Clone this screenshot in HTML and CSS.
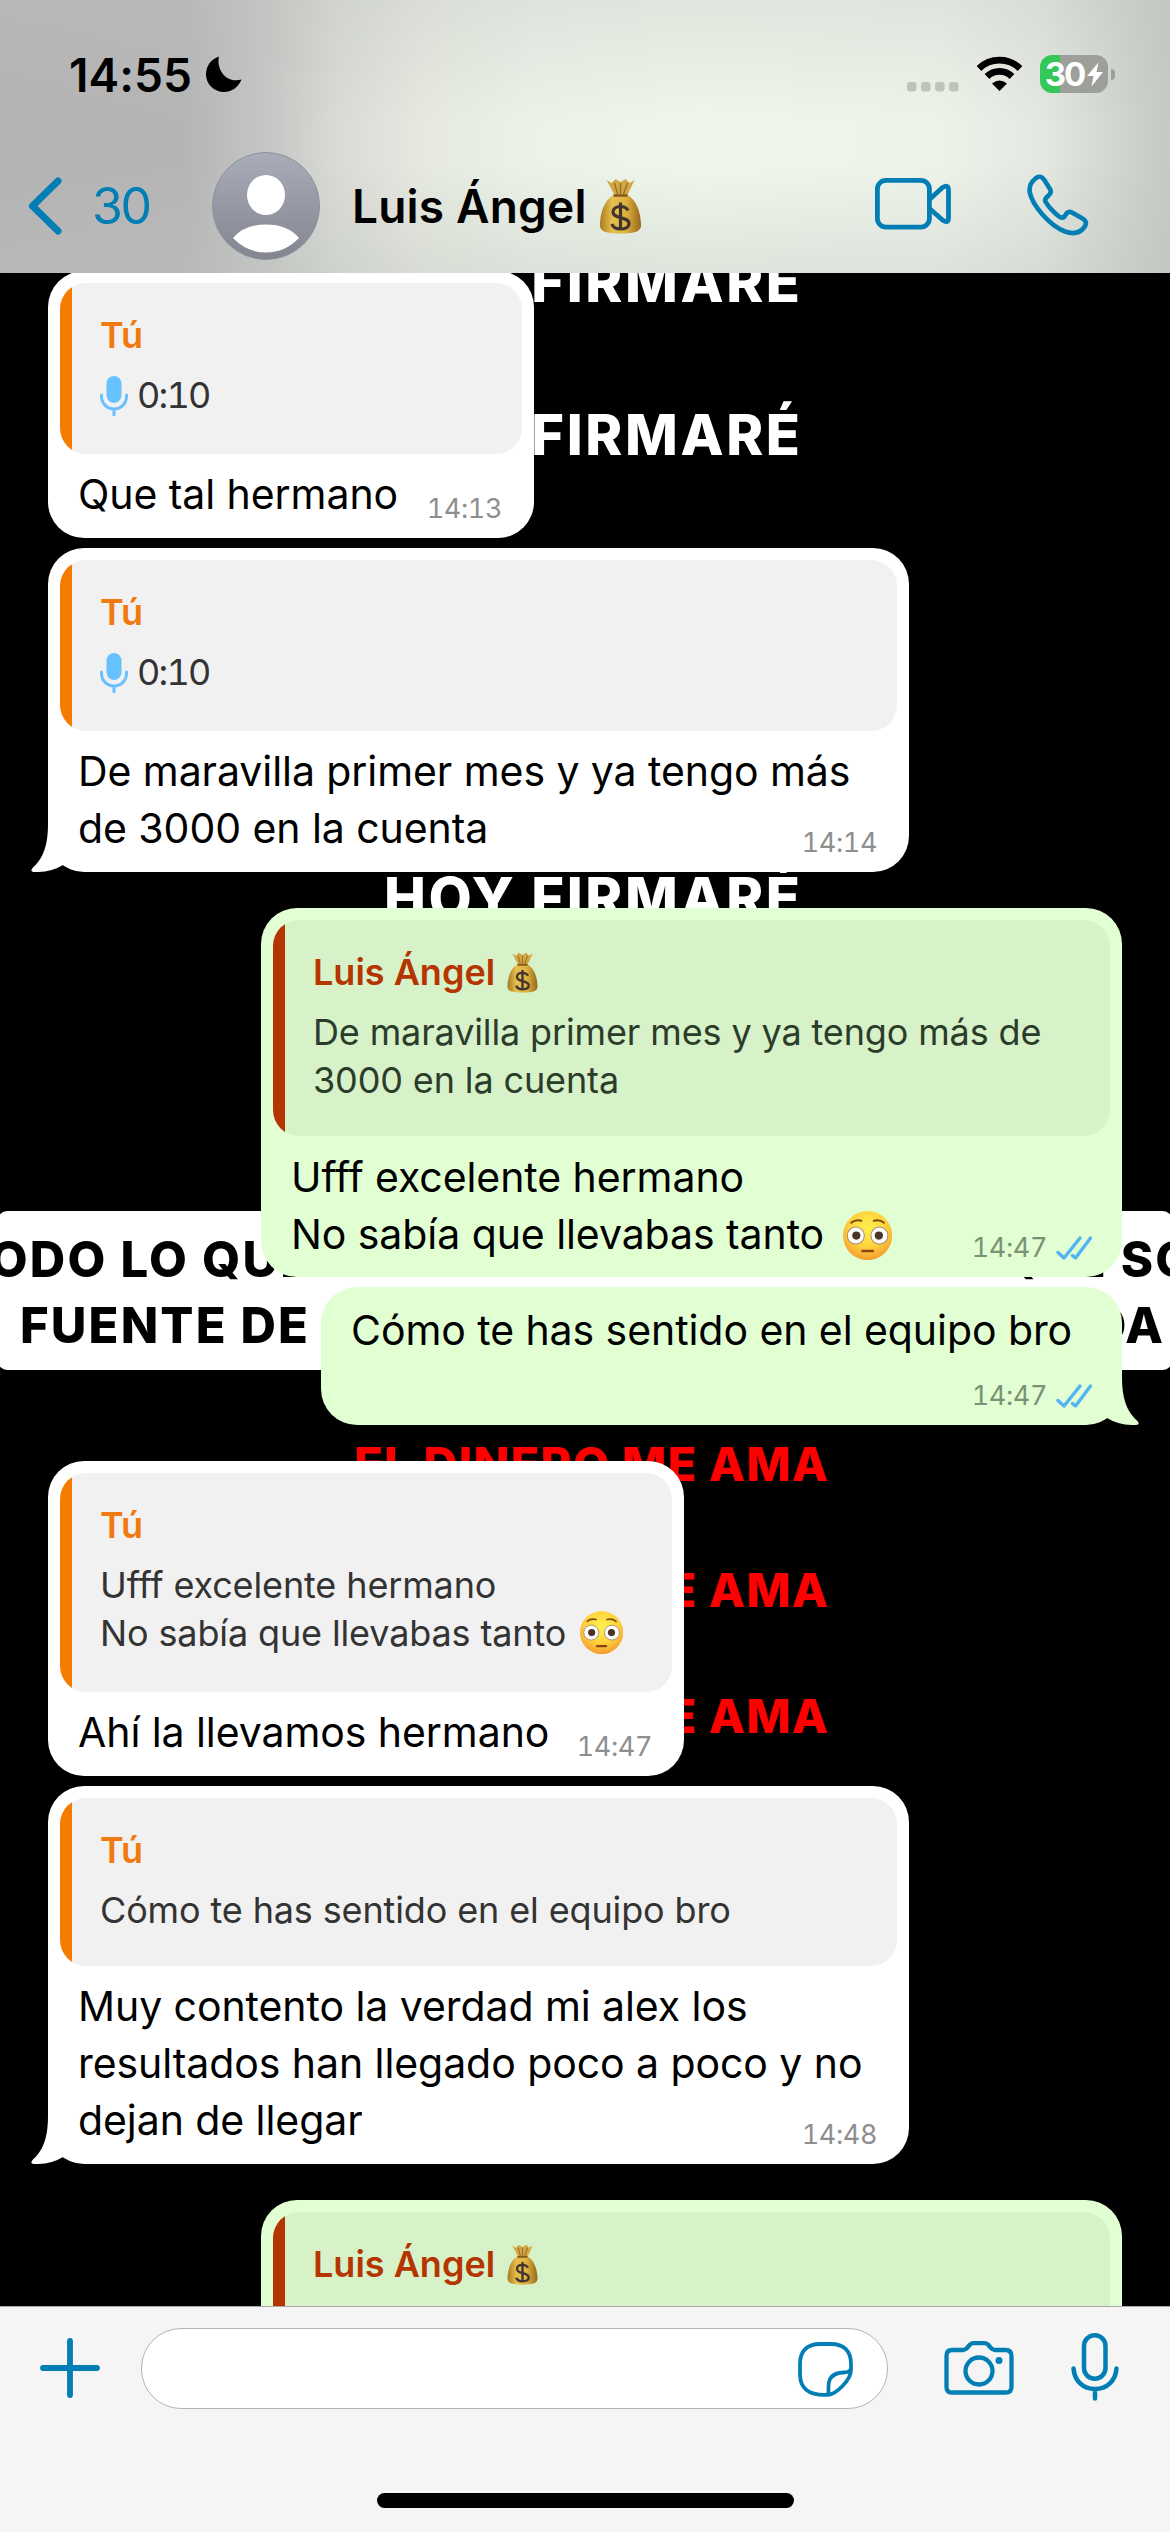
FILE: index.html
```html
<!DOCTYPE html>
<html lang="es">
<head>
<meta charset="utf-8">
<title>Luis Ángel</title>
<link rel="stylesheet" href="styles.css">
</head>
<body>
<svg width="0" height="0" class="defs" aria-hidden="true">
  <defs>
    <linearGradient id="gold" x1="0" x2="1"><stop offset="0" stop-color="#a87a1c"/><stop offset=".3" stop-color="#e8c050"/><stop offset=".65" stop-color="#ddb03c"/><stop offset="1" stop-color="#94681c"/></linearGradient>
    <radialGradient id="skin" cx=".5" cy=".35" r=".7"><stop offset="0" stop-color="#fff04f"/><stop offset=".55" stop-color="#ffd23c"/><stop offset="1" stop-color="#f0922c"/></radialGradient>
    <linearGradient id="avatar" x1="0" y1="0" x2="0" y2="1"><stop offset="0" stop-color="#a9adba"/><stop offset="1" stop-color="#83858f"/></linearGradient>
  </defs>
  <symbol id="bag" viewBox="0 0 42 56">
    <path d="M7 2 L12 5 L16 1 L21 4 L26 1 L30 5 L35 2 L28 17 H15Z" fill="#d3a743"/>
    <path d="M15 5l3 11M21 5v11M28 5l-4 11" stroke="#9a702a" stroke-width="1.5" fill="none"/>
    <path d="M14 17 H28 C37 22 41 34 41.500 46 C42 53 37 55.500 21 55.500 C5 55.500 0 53 .5 46 C1 34 5 22 14 17Z" fill="url(#gold)"/>
    <path d="M14 17.500h14" stroke="#86581c" stroke-width="2.500"/>
    <path d="M28.500 32.500C27 29.500 24.500 28.500 21 28.500c-4.500 0-7.500 2-7.500 5.500 0 7.500 16 4 16 11.500 0 3.500-3.500 5.500-8.500 5.500-4.500 0-7.500-1.500-8.500-5M21 24.500v28" fill="none" stroke="#42352f" stroke-width="3.200"/>
  </symbol>
  <symbol id="flushed" viewBox="0 0 48 48">
    <circle cx="24" cy="24" r="24" fill="url(#skin)"/>
    <circle cx="12.500" cy="24" r="8.300" fill="#fff" stroke="#a28b75" stroke-width="1"/>
    <circle cx="35.500" cy="24" r="8.300" fill="#fff" stroke="#a28b75" stroke-width="1"/>
    <circle cx="13" cy="24" r="4" fill="#4d3326"/><circle cx="35" cy="24" r="4" fill="#4d3326"/>
    <path d="M8 11.500q4-3.500 10-2M30 9.500q6-1.500 10 2" fill="none" stroke="#7b4a12" stroke-width="1.800" stroke-linecap="round"/>
    <path d="M19 39h10" stroke="#8b4316" stroke-width="2.600" stroke-linecap="round"/>
  </symbol>
  <symbol id="voice" viewBox="0 0 28 40">
    <rect x="6.500" y="0" width="15" height="27" rx="7.500" fill="#68c1ff"/>
    <path d="M1.500 19v1.500a12.500 12.500 0 0 0 25 0V19M14 33v6" fill="none" stroke="#68c1ff" stroke-width="3" stroke-linecap="round"/>
  </symbol>
  <symbol id="read" viewBox="0 0 36 24">
    <path d="M2 16.500l6 5.500L24 2M16.500 19.500l3 2.500L34.500 2" fill="none" stroke="#53b4f5" stroke-width="3.400" stroke-linecap="round" stroke-linejoin="round"/>
  </symbol>
  <symbol id="tail" viewBox="0 0 40 48">
    <path d="M17 0C17 26 10 36 1.500 44Q-1.500 48 3 48Q20 48.500 32 41L36 36L30 0Z" fill="currentColor"/>
  </symbol>
</svg>

<div class="phone">
  <header class="header">
    <div class="status">
      <span class="clock">14:55</span>
      <svg class="moon" viewBox="0 0 36 36"><path d="M13 .5C10 13 20 28 35.500 23.500C32 32 25 36 18 36C8 36 0 28 0 18.500C0 10 5 3 13 .5Z"/></svg>
      <svg class="dots" viewBox="0 0 52 10" fill="#bfc3bc"><rect width="9.500" height="9.500" rx="3"/><rect x="14" width="9.500" height="9.500" rx="3"/><rect x="28" width="9.500" height="9.500" rx="3"/><rect x="42" width="9.500" height="9.500" rx="3"/></svg>
      <svg class="wifi" viewBox="0 0 48 36"><path d="M3.500 13.500A29.500 29.500 0 0 1 44.500 13.500M11.500 21.500A18 18 0 0 1 36.500 21.500" fill="none" stroke="#000" stroke-width="6.800"/><path d="M24 36L16.500 28.500Q24 22.500 31.500 28.500Z"/></svg>
      <div class="battery"><span>30</span><svg viewBox="0 0 16 24"><path d="M11.500 0L0 13.500H6.500L4.500 24L16 9.500H9.500Z" fill="#fff"/></svg></div>
      <i class="nub"></i>
    </div>
    <div class="bar">
      <svg class="back" viewBox="0 0 34 58"><path d="M30 4L4.500 29L30 54" fill="none" stroke="#027eb5" stroke-width="7" stroke-linecap="round" stroke-linejoin="round"/></svg>
      <span class="unread">30</span>
      <svg class="avatar" viewBox="0 0 108 108"><circle cx="54" cy="54" r="53.500" fill="url(#avatar)" stroke="#8d909c"/><ellipse cx="54" cy="43" rx="19" ry="20" fill="#fff"/><path d="M21 86Q32 72.500 54 72.500T87 86Q73 100.500 54 100.500T21 86Z" fill="#fff"/></svg>
      <span class="contact">Luis Ángel</span>
      <svg class="contact-bag"><use href="#bag"/></svg>
      <svg class="video" viewBox="0 0 77 52" fill="none" stroke="#027eb5" stroke-width="4.800" stroke-linejoin="round"><rect x="2.400" y="2.400" width="52" height="46.700" rx="8.500"/><path d="M55 21L67.500 9.500Q73.500 6 73.500 12V40Q73.500 46 67.500 42L55 31"/></svg>
      <svg class="call" viewBox="0 0 62 62" fill="none" stroke="#027eb5" stroke-width="4.600" stroke-linejoin="round"><path d="M8.500 4.500C11.500 1.500 15 2.500 17 5.500L23 15C24.500 17.500 23.500 20 21.500 21.500L19.500 23.500C18 25 18 27 19 28.500C22.500 34 27 38.500 32 42.500C34 44 36 44 37.500 42.500L39.500 39.500C41 37.500 43 37.500 45 38.500L55.500 44.500C59 46.500 60 49.500 57.500 53C53 59 46 60.500 38 57.500C22 51 5.500 31.500 2.800 18.500C2 13 4 8 8.500 4.500Z"/></svg>
    </div>
  </header>

  <main class="chat">
    <svg class="wallpaper" viewBox="0 273 1170 2033" aria-hidden="true">
      <g fill="#fff" font-size="56">
        <text x="384" y="302" textLength="416">HOY FIRMARÉ</text>
        <text x="384" y="455" textLength="416">HOY FIRMARÉ</text>
        <text x="384" y="918" textLength="416">HOY FIRMARÉ</text>
      </g>
      <rect x="-2" y="1211" width="1174" height="159" rx="9" fill="#fff"/>
      <g fill="#000" font-size="49">
        <text x="-44" y="1277" textLength="1274">TODO LO QUE ME DESEO LO TENGO PORQUE SOY</text>
        <text x="20" y="1343" textLength="288">FUENTE DE</text>
        <text x="1091" y="1343" textLength="72">DA</text>
      </g>
      <g fill="#f00" font-size="47">
        <text x="354" y="1481" textLength="474">EL DINERO ME AMA</text>
        <text x="354" y="1607" textLength="474">EL DINERO ME AMA</text>
        <text x="354" y="1733" textLength="474">EL DINERO ME AMA</text>
      </g>
    </svg>

    <article class="bubble in w-s">
      <div class="quote"><b>Tú</b><p class="audio"><svg><use href="#voice"/></svg>0:10</p></div>
      <div class="body"><p>Que tal hermano</p><span class="meta">14:13</span></div>
    </article>
    <article class="bubble in w-l follow">
      <div class="quote"><b>Tú</b><p class="audio"><svg><use href="#voice"/></svg>0:10</p></div>
      <div class="body"><p>De maravilla primer mes y ya tengo más<br>de 3000 en la cuenta</p><span class="meta">14:14</span></div>
      <svg class="tail"><use href="#tail"/></svg>
    </article>
    <article class="bubble out w-l">
      <div class="quote"><b>Luis Ángel<svg class="name-bag"><use href="#bag"/></svg></b><p>De maravilla primer mes y ya tengo más de<br>3000 en la cuenta</p></div>
      <div class="body"><p>Ufff excelente hermano<br>No sabía que llevabas tanto <svg class="face"><use href="#flushed"/></svg></p><span class="meta">14:47<svg><use href="#read"/></svg></span></div>
    </article>
    <article class="bubble out w-x follow plain">
      <div class="body"><p>Cómo te has sentido en el equipo bro</p><span class="meta">14:47<svg><use href="#read"/></svg></span></div>
      <svg class="tail"><use href="#tail"/></svg>
    </article>
    <article class="bubble in w-m">
      <div class="quote tall"><b>Tú</b><p>Ufff excelente hermano<br>No sabía que llevabas tanto <svg class="face"><use href="#flushed"/></svg></p></div>
      <div class="body"><p>Ahí la llevamos hermano</p><span class="meta">14:47</span></div>
    </article>
    <article class="bubble in w-l follow">
      <div class="quote"><b>Tú</b><p>Cómo te has sentido en el equipo bro</p></div>
      <div class="body"><p>Muy contento la verdad mi alex los<br>resultados han llegado poco a poco y no<br>dejan de llegar</p><span class="meta">14:48</span></div>
      <svg class="tail"><use href="#tail"/></svg>
    </article>
    <article class="bubble out w-l">
      <div class="quote"><b>Luis Ángel<svg class="name-bag"><use href="#bag"/></svg></b></div>
    </article>
  </main>

  <footer class="footer">
    <div class="composer">
      <svg class="plus" viewBox="0 0 60 60"><path d="M3 30H57M30 3V57" stroke="#027eb5" stroke-width="5.800" stroke-linecap="round"/></svg>
      <div class="input"><svg viewBox="0 0 55 55" fill="none" stroke="#027eb5" stroke-width="3.800" stroke-linejoin="round"><path d="M30 52.800C38 52.500 53 38 53 28V22C53 9 46 2 33 2H22C9 2 2 9 2 22V32C2 46 10 54 30 52.800ZM30 52C31.500 48 29 43 32 37C35.500 31 41 30.500 46 30.500Q51 30.500 52.500 27.500"/></svg></div>
      <svg class="camera" viewBox="0 0 70 54" fill="none" stroke="#027eb5" stroke-width="4.300" stroke-linejoin="round"><path d="M8 9H19Q21.500 9 23 7L26 3.500Q27.500 2.200 29.500 2.200H40.500Q42.500 2.200 44 3.500L47 7Q48.500 9 51 9H61.500Q67.500 9 67.500 15V46Q67.500 51.500 61.500 51.500H8Q2.500 51.500 2.500 46V15Q2.500 9 8 9Z"/><circle cx="35" cy="30" r="13.500"/><circle cx="55" cy="19.500" r="3.500" fill="#027eb5" stroke="none"/></svg>
      <svg class="mic" viewBox="0 0 48 68" fill="none" stroke="#027eb5" stroke-width="4.500" stroke-linecap="round"><rect x="13" y="2.300" width="21.500" height="43.500" rx="10.700"/><path d="M2.500 35.500C3.500 48 12 56 24 56S44.500 48 45.500 35.500M24 56V65.500"/></svg>
    </div>
    <i class="home"></i>
  </footer>
</div>
</body>
</html>
```
FILE: styles.css
```css
* { box-sizing: border-box; }
body { margin: 0; font-family: Inter, "Liberation Sans", sans-serif; color: #000; background: #000; }
p { margin: 0; white-space: nowrap; }
svg { display: block; flex: none; }
.defs { position: absolute; }
.phone { width: 1170px; height: 2532px; display: flex; flex-direction: column; overflow: hidden; }

.header {
  height: 273px;
  flex: none;
  display: flex;
  flex-direction: column;
  background:
    linear-gradient(180deg, rgba(190,194,190,.3), rgba(255,255,255,0) 45%, rgba(255,255,255,0) 60%, rgba(190,196,190,.35)),
    linear-gradient(90deg, #b3b3b3 0, #b5b5b5 16%, #c6c7c5 23%, #d9dbd6 29%, #e6e9e0 36%, #ebf3e9 46%, #eff6eb 60%, #eef3ea 80%, #e4e8e1 89%, #cdd1cb 97%, #c5c9c4 100%);
}
.status { height: 124px; display: flex; padding: 55px 0 0 69px; }
.clock { width: 137px; font-size: 46px; font-weight: 600; line-height: 40px; letter-spacing: .1px; }
.moon { width: 36px; height: 36px; margin-top: 1px; }
.dots { width: 52px; height: 10px; margin: 27px 0 0 665px; }
.wifi { width: 49px; height: 36px; margin-left: 16px; }
.battery { width: 68px; height: 38px; margin-left: 16px; border-radius: 12px; display: flex; align-items: center; justify-content: center; gap: 3px; background: linear-gradient(90deg, #34c759 20px, #9c9f9a 20px); color: #fff; font-size: 33px; font-weight: 700; letter-spacing: -2px; }
.battery svg { width: 16px; height: 25px; }
.nub { width: 4px; height: 11px; margin: 14px 0 0 3px; border-radius: 0 6px 6px 0; background: #9c9f9a; }
.bar { height: 149px; display: flex; align-items: center; padding: 15px 0 0 28px; }
.back { width: 34px; height: 58px; }
.unread { width: 121px; margin-left: 30px; color: #027eb5; font-size: 50px; line-height: 60px; letter-spacing: -2.4px; }
.avatar { width: 108px; height: 108px; margin-left: -1px; }
.contact { width: 248px; margin-left: 32px; font-size: 46px; font-weight: 600; line-height: 60px; letter-spacing: .2px; white-space: nowrap; }
.contact-bag { width: 43px; height: 56px; margin-left: -1px; }
.video { width: 77px; height: 52px; margin-left: 233px; margin-top: -4px; }
.call { width: 62px; height: 62px; margin-left: 75px; margin-top: -3px; }

.chat { position: relative; height: 2033px; flex: none; overflow: hidden; display: flex; flex-direction: column; padding: 0 48px; }
.wallpaper { position: absolute; left: 0; top: 0; width: 1170px; height: 2033px; font-weight: 800; }
.bubble { position: relative; flex: none; margin-top: 36px; padding: 12px 12px 15px; border-radius: 36px; }
.bubble:first-of-type { margin-top: -2px; }
.bubble.follow { margin-top: 10px; }
.in { align-self: flex-start; background: #fff; color: #fff; }
.out { align-self: flex-end; background: #e1ffd3; color: #e1ffd3; }
.w-s { width: 486px; }
.w-m { width: 636px; }
.w-x { width: 801px; }
.w-l { width: 861px; }

.quote { padding: 28px 0 29px 40px; border-radius: 26px; font-size: 36px; line-height: 48px; }
.in .quote { background: linear-gradient(90deg, #f57c00 12px, #f1f1f1 12px); color: #333; }
.out .quote { background: linear-gradient(90deg, #b53500 12px, #d7f2c9 12px); color: #2c3c2a; }
.quote b { display: flex; font-weight: 600; height: 60px; letter-spacing: 0; }
.in .quote b { color: #f07a10; }
.out .quote b { color: #b53500; }
.quote p { margin-bottom: 3px; letter-spacing: -.13px; }
.quote .audio { display: flex; gap: 9px; margin-bottom: 6px; letter-spacing: -1.8px; font-variant-numeric: tabular-nums; }
.audio svg { width: 28px; height: 40px; margin-top: 5px; }
.name-bag { width: 31px; height: 41px; margin: 4px 0 0 12px; }
.quote.tall { padding-bottom: 32px; }

.body { display: grid; padding: 12px 0 0 18px; color: #000; font-size: 41px; line-height: 57px; letter-spacing: -.07px; }
.out .body { padding-top: 13px; margin-bottom: -1px; }
.body > * { grid-area: 1 / 1; }
.plain { padding-top: 2px; padding-bottom: 15px; }
.plain .body { height: 122px; }
.face { display: inline-block; width: 1.2em; height: 1.2em; margin: -10px 0 -10px 7px; vertical-align: -.2em; position: relative; top: -7px; }
.quote .face { margin-left: 4px; top: -9px; }
.meta { align-self: end; justify-self: end; display: flex; align-items: center; gap: 9px; margin: 0 20px -1px 0; color: #8e8e8e; font-size: 27px; line-height: 30px; letter-spacing: -.4px; font-variant-numeric: tabular-nums; }
.out .meta { color: #7b9374; margin-right: 18px; margin-bottom: 0; }
.meta svg { width: 36px; height: 24px; }
.tail { position: absolute; left: -17px; bottom: 0; width: 40px; height: 48px; }
.out .tail { left: auto; right: -17px; transform: scaleX(-1); }

.footer { height: 226px; flex: none; background: #f5f5f5; border-top: 1px solid #a9a9a9; display: flex; flex-direction: column; align-items: center; }
.composer { width: 1170px; height: 186px; display: flex; align-items: flex-start; padding: 21px 0 0 40px; }
.plus { width: 60px; height: 60px; margin-top: 10px; }
.input { width: 747px; height: 81px; margin-left: 41px; border: 1px solid #b4b4b4; border-radius: 40px; background: #fff; display: flex; justify-content: flex-end; padding: 13px 34px 0 0; }
.input svg { width: 55px; height: 55px; }
.camera { width: 70px; height: 54px; margin: 13px 0 0 56px; }
.mic { width: 48px; height: 68px; margin: 5px 0 0 57px; }
.home { width: 417px; height: 15px; border-radius: 8px; background: #000; }
```
